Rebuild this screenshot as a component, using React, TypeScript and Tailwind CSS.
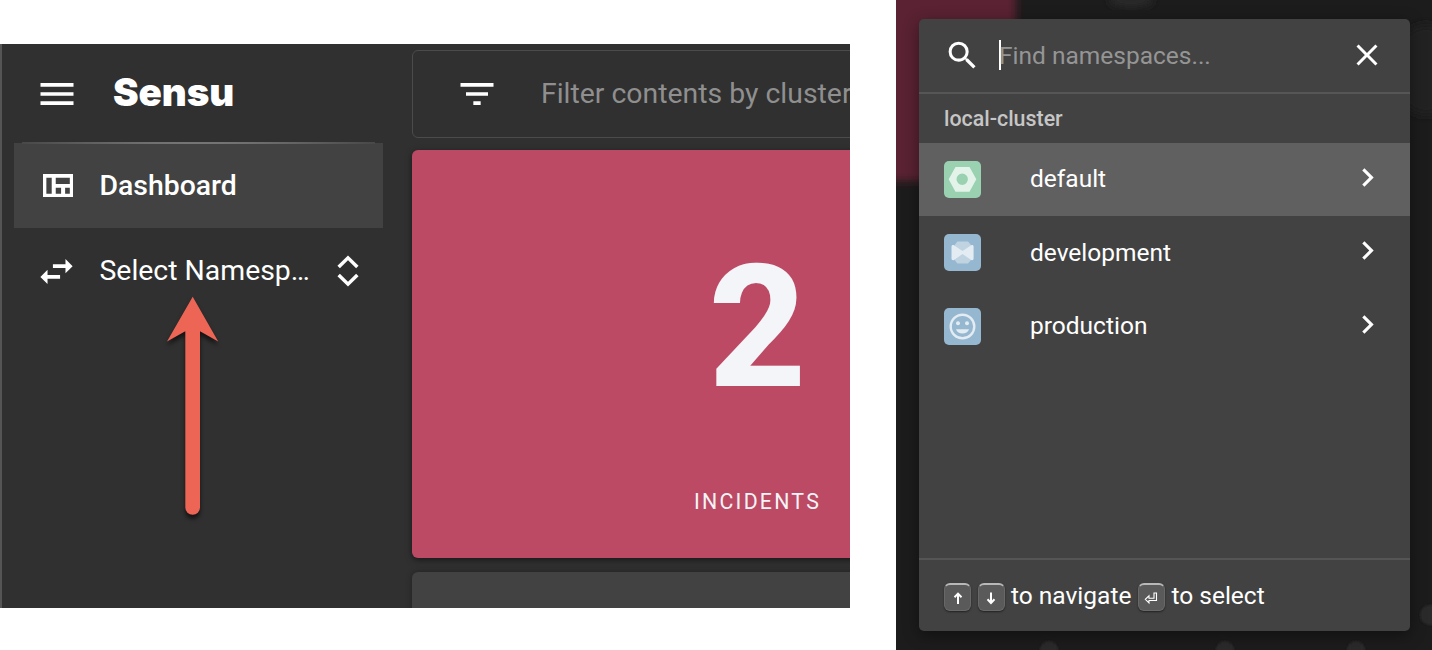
import type { ReactNode } from "react";
import { MdChevronRight, MdClose, MdFilterList, MdMenu, MdSearch, MdSwapHoriz } from "react-icons/md";

function QuiltIcon() {
  return (
    <svg className="ml-[28.500px] h-[23.500px] w-[30.500px] shrink-0" viewBox="0 0 91 70" fill="currentColor">
      <path
        fillRule="evenodd"
        d="M0 0H91V70H0ZM10 11V59H26V11ZM38 11V30H80V11ZM38 41V59H54V41ZM66 41V59H80V41Z"
      />
    </svg>
  );
}

function UnfoldIcon() {
  return (
    <svg className="h-8 w-[22px] shrink-0" viewBox="0 0 66 96" fill="none" stroke="currentColor" strokeWidth="10.500">
      <path d="M5 36L33 8.500L61 36M5 60L33 87.500L61 60" />
    </svg>
  );
}

function Arrow() {
  return (
    <svg className="absolute left-[150px] top-[240px] h-[250px] w-[80px] overflow-visible" viewBox="0 0 80 250">
      <path
        className="drop-shadow-[0_4px_2px_rgba(0,0,0,0.6)]"
        fill="#ed6555"
        d="M40.700 12.800L66.200 57.500L48 47.300V223.500A7.300 7.300 0 0 1 33.300 223.500V47.300L15 57.500Z"
      />
    </svg>
  );
}

function HexTile() {
  return (
    <svg className="size-[37px]" viewBox="0 0 37 37">
      <rect width="37" height="37" rx="5" fill="#9ad2b1" />
      <path
        fillRule="evenodd"
        fill="#e3f3e9"
        d="M11.500 6H25.500L32.300 18.300L25.500 30.700H11.500L4.700 18.300ZM18.200 12.600A5.700 5.700 0 1 0 18.200 24A5.700 5.700 0 1 0 18.200 12.600Z"
      />
    </svg>
  );
}

function BowTile() {
  return (
    <svg className="size-[37px]" viewBox="0 0 37 37">
      <rect width="37" height="37" rx="5" fill="#95b7d0" />
      <path fill="#bfd3e1" d="M13.500 7.500H24L27 11V26L24 29.500H13.500L10.500 26V11Z" />
      <path
        fill="#e2ecf2"
        d="M7.500 12.500C7.500 11 8.800 10.500 10 11.300L18.500 17L27.200 11.300C28.400 10.500 29.600 11 29.600 12.500V24.600C29.600 26 28.400 26.700 27.200 25.900L18.500 20.100L10 25.900C8.800 26.700 7.500 26 7.500 24.600Z"
      />
    </svg>
  );
}

function SmileTile() {
  return (
    <svg className="size-[37px]" viewBox="0 0 37 37">
      <rect width="37" height="37" rx="5" fill="#95b7d0" />
      <g fill="#e2ecf2">
        <circle cx="18.500" cy="18.500" r="11.800" fill="none" stroke="#e2ecf2" strokeWidth="2.400" />
        <circle cx="14" cy="15.300" r="2" />
        <circle cx="23" cy="15.300" r="2" />
        <path d="M12 21.300H25C24 24.200 21.500 25.600 18.500 25.600S13 24.200 12 21.300Z" />
      </g>
    </svg>
  );
}

function Key({ children }: { children: ReactNode }) {
  return (
    <span className="mt-[4px] flex h-[28px] w-[27px] shrink-0 items-center justify-center rounded-[6px] border border-[#686868] border-t-2 border-t-[#b8b8b8] bg-[#5a5a5a] shadow-[0_1px_2px_rgba(0,0,0,0.5)]">
      <svg className="size-[14px]" viewBox="0 0 14 14" fill="none" stroke="white" strokeWidth="2">
        {children}
      </svg>
    </span>
  );
}

function Row({ icon, label, active = false }: { icon: ReactNode; label: string; active?: boolean }) {
  return (
    <div className={`flex h-[73.5px] items-center pl-[25px] pr-[24px] ${active ? "bg-[#606060]" : ""}`}>
      {icon}
      <span className="ml-[49px] flex-1 text-[24.500px] leading-none">{label}</span>
      <MdChevronRight className="mb-[4px] size-[37px]" />
    </div>
  );
}

function Dashboard() {
  return (
    <section className="relative mt-[44px] flex h-[564px] w-[850px] overflow-hidden border-l-2 border-[#555555] bg-[#303030]">
      <nav className="w-[410px] shrink-0 pl-[12px] pr-[29px]">
        <div className="flex h-[99px] items-center">
          <MdMenu className="ml-[21px] size-[44px]" />
          <span className="ml-[34px] pb-[3px] font-[Inter] text-[38.500px] leading-none font-black tracking-[-0.100px]">
            Sensu
          </span>
        </div>
        <div className="relative flex h-[85px] items-center bg-[#424242]">
          <div className="absolute inset-x-2 -top-px h-[2px] bg-[radial-gradient(ellipse_at_center,#999999_0%,#424242_85%)]" />
          <QuiltIcon />
          <span className="ml-[26.500px] pt-[2px] text-[28.400px] leading-none font-medium">Dashboard</span>
        </div>
        <div className="flex h-[85px] items-center">
          <MdSwapHoriz className="ml-[21px] mt-px size-[43px] shrink-0" />
          <span className="ml-[21.500px] w-[237px] shrink-0 whitespace-nowrap pt-[2px] text-[28.400px] leading-none">
            Select Namesp…
          </span>
          <UnfoldIcon />
        </div>
      </nav>
      <main className="flex w-[500px] shrink-0 flex-col pt-[5.500px]">
        <div className="flex h-[88.500px] shrink-0 items-center rounded-md border-[1.500px] border-[#4b4b4b]">
          <MdFilterList className="ml-[42px] size-[44px] shrink-0" />
          <span className="ml-[42px] whitespace-nowrap text-[28.400px] leading-none text-[#8f8f8f]">
            Filter contents by cluster
          </span>
        </div>
        <div className="mt-[12px] flex h-[408px] shrink-0 flex-col rounded-md bg-[#bd4a64] pl-[282px] pt-[90px] text-[#f4f5f8] shadow-[0_2px_6px_rgba(0,0,0,0.5)]">
          <span className="ml-[14.500px] text-[170px] leading-[176px] font-extrabold">2</span>
          <span className="mt-[74px] text-[21.300px] leading-[24px] tracking-[2.250px]">INCIDENTS</span>
        </div>
        <div className="mt-[14px] h-[60px] shrink-0 rounded-t-md bg-[#424242] shadow-[0_0_6px_rgba(0,0,0,0.3)]" />
      </main>
      <Arrow />
    </section>
  );
}

function Backdrop() {
  return (
    <svg className="absolute inset-0 h-[650px] w-[536px]" viewBox="0 0 536 650">
      <defs>
        <filter id="soft" x="-20%" y="-20%" width="140%" height="140%">
          <feGaussianBlur stdDeviation="4" />
        </filter>
        <filter id="dot" x="-20%" y="-20%" width="140%" height="140%">
          <feGaussianBlur stdDeviation="1" />
        </filter>
      </defs>
      <rect x="-20" y="-20" width="140" height="201" fill="#5a2230" filter="url(#soft)" />
      <ellipse cx="530" cy="70" rx="34" ry="45" fill="#232323" filter="url(#soft)" />
      <ellipse cx="235" cy="0" rx="22" ry="7" fill="#2a2a2a" filter="url(#soft)" />
      <g fill="#2c2c2c" filter="url(#dot)">
        <circle cx="153" cy="650" r="9" />
        <circle cx="329" cy="650" r="9" />
        <circle cx="460" cy="650" r="9" />
        <circle cx="534" cy="615" r="10" />
      </g>
    </svg>
  );
}

function Switcher() {
  return (
    <section className="relative h-[650px] w-[536px] overflow-hidden bg-[#1c1c1c] pl-[23px] pt-[18.500px]">
      <Backdrop />
      <div className="relative flex h-[612.500px] w-[491px] flex-col rounded-[5px] bg-[#424242] shadow-[0_4px_16px_rgba(0,0,0,0.4)]">
        <div className="flex h-[75px] items-center border-b-2 border-[#565656] pl-[24.500px] pr-[25px]">
          <MdSearch className="size-[37px]" />
          <span className="ml-[18.500px] h-[30px] w-[2px] bg-white" />
          <span className="-ml-[2px] flex-1 pt-[3px] text-[24.500px] leading-none text-[#959595]">
            Find namespaces...
          </span>
          <MdClose className="size-[36px]" />
        </div>
        <div className="flex h-[49px] items-center pl-[25px] pt-px text-[21.400px] leading-none font-medium text-[#c6c6c6]">
          local-cluster
        </div>
        <div className="flex flex-1 flex-col">
          <Row active icon={<HexTile />} label="default" />
          <Row icon={<BowTile />} label="development" />
          <Row icon={<SmileTile />} label="production" />
        </div>
        <div className="flex h-[73.500px] items-center gap-[6.500px] border-t-2 border-[#555555] pl-[25px] text-[24.500px] leading-none">
          <Key>
            <path d="M7 13V3M3.500 6.200L7 2.600L10.500 6.200" />
          </Key>
          <Key>
            <path d="M7 1.500V11.500M3.500 8.300L7 12L10.500 8.300" />
          </Key>
          <span className="whitespace-nowrap pt-[2px]">to navigate</span>
          <Key>
            <path strokeWidth="1.100" d="M10 2H12.500V9.500H5V12L1.300 8.300L5 4.800V7.200H10Z" />
          </Key>
          <span className="whitespace-nowrap pt-[2px]">to select</span>
        </div>
      </div>
    </section>
  );
}

export default function App() {
  return (
    <div className="flex h-[650px] w-[1432px] items-start gap-[46px] overflow-hidden bg-white font-[Roboto,sans-serif] text-white">
      <Dashboard />
      <Switcher />
    </div>
  );
}
